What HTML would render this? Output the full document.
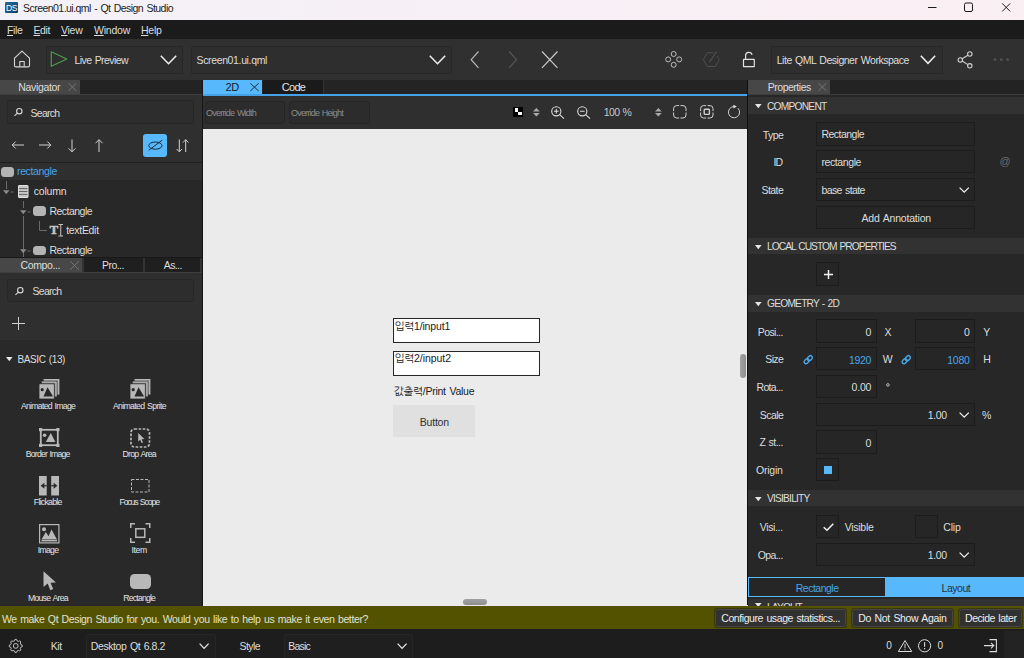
<!DOCTYPE html>
<html lang="en">
<head>
<meta charset="utf-8">
<title>Screen01.ui.qml - Qt Design Studio</title>
<style>
*{box-sizing:border-box;margin:0;padding:0}
html,body{width:1024px;height:658px;overflow:hidden;background:#262626}
body{font-family:"Liberation Sans","NanumGothic","Noto Sans CJK KR",sans-serif;font-size:10.500px;color:#e6e6e6;position:relative}
.a{position:absolute}
.t{position:absolute;white-space:nowrap;line-height:14px;height:14px}
svg{overflow:visible}
u{text-decoration-thickness:1px;text-underline-offset:1px}
</style>
</head>
<body>
<div class="a" style="left:0px;top:0px;width:1024px;height:20px;background:linear-gradient(90deg,#f3f1f8 0%,#f6f0f6 35%,#faeff3 100%);"></div>
<div class="a" style="left:5px;top:2px;width:13px;height:11px;background:linear-gradient(135deg,#2a6a99,#0d3d66);border-radius:1px"></div>
<div class="t" style="letter-spacing:-0.306px;left:5.9px;top:0.65px;font-size:8.5px;color:#ffffff;">DS</div>
<div class="t" style="letter-spacing:-0.535px;left:23px;top:0.61px;font-size:10.5px;color:#1c1c1c;word-spacing:0.9px;">Screen01.ui.qml - Qt Design Studio</div>
<svg class="a" style="left:920px;top:0px;" width="100" height="20" viewBox="0 0 100 20"><g fill="none" stroke="#1a1a1a" stroke-width="1"><path d="M8 7.500h8.500"/><rect x="44.500" y="3" width="8" height="8.500" rx="1.500"/><path d="M82.200 3.400l8 8M90.200 3.400l-8 8"/></g></svg>
<div class="a" style="left:0px;top:20px;width:1024px;height:19px;background:#1b1b1b;"></div>
<div class="t" style="letter-spacing:-0.359px;left:7px;top:23.46px;font-size:10.5px;color:#dedede;"><u>F</u>ile</div>
<div class="t" style="letter-spacing:-0.402px;left:33.5px;top:23.46px;font-size:10.5px;color:#dedede;"><u>E</u>dit</div>
<div class="t" style="letter-spacing:-0.273px;left:61px;top:23.46px;font-size:10.5px;color:#dedede;"><u>V</u>iew</div>
<div class="t" style="letter-spacing:-0.227px;left:94px;top:23.46px;font-size:10.5px;color:#dedede;"><u>W</u>indow</div>
<div class="t" style="letter-spacing:-0.277px;left:141px;top:23.46px;font-size:10.5px;color:#dedede;"><u>H</u>elp</div>
<div class="a" style="left:0px;top:39px;width:1024px;height:41px;background:#303030;"></div>
<div class="a" style="left:45.5px;top:45.5px;width:137.5px;height:28px;background:#2e2e2e;border:1px solid #272727;border-radius:2px;"></div>
<div class="a" style="left:191px;top:45.5px;width:261px;height:28px;background:#2e2e2e;border:1px solid #272727;border-radius:2px;"></div>
<div class="a" style="left:771px;top:45.5px;width:171.5px;height:28px;background:#2e2e2e;border:1px solid #272727;border-radius:2px;"></div>
<svg class="a" style="left:13px;top:50px;" width="18" height="18" viewBox="0 0 18 18"><g fill="none" stroke="#d8d8d8" stroke-width="1.100" stroke-linejoin="round"><path d="M1.500 8.200L9 1.200l7.500 7v7.200a1.500 1.500 0 0 1-1.500 1.500H3a1.500 1.500 0 0 1-1.500-1.500z"/><path d="M6.800 16.800v-5.300h4.400v5.300"/></g></svg>
<svg class="a" style="left:50px;top:51px;" width="18" height="16" viewBox="0 0 18 16"><path d="M1.300 0.800L16.800 8 1.300 15.300z" fill="none" stroke="#4e9a4e" stroke-width="1.200" stroke-linejoin="round"/></svg>
<div class="t" style="letter-spacing:-0.578px;left:74.5px;top:52.61px;font-size:10.5px;color:#dedede;word-spacing:0.9px;">Live Preview</div>
<svg class="a" style="left:160px;top:55.3px;" width="17" height="10" viewBox="0 0 17 10"><path d="M0.800 0.800l7.700 7.900 7.700-7.900" fill="none" stroke="#f0f0f0" stroke-width="1.500"/></svg>
<div class="t" style="letter-spacing:-0.358px;left:196.5px;top:52.61px;font-size:10.5px;color:#dedede;">Screen01.ui.qml</div>
<svg class="a" style="left:429px;top:55.3px;" width="17" height="10" viewBox="0 0 17 10"><path d="M0.800 0.800l7.700 7.900 7.700-7.900" fill="none" stroke="#f0f0f0" stroke-width="1.500"/></svg>
<svg class="a" style="left:470px;top:50.7px;" width="10" height="18" viewBox="0 0 10 18"><path d="M8.500 0.500L1.200 8.700l7.300 8.200" fill="none" stroke="#b8b8b8" stroke-width="1.200"/></svg>
<svg class="a" style="left:508px;top:50.7px;" width="10" height="18" viewBox="0 0 10 18"><path d="M1.200 0.500l7.300 8.200-7.300 8.200" fill="none" stroke="#555" stroke-width="1.200"/></svg>
<svg class="a" style="left:541px;top:50.7px;" width="18" height="18" viewBox="0 0 18 18"><path d="M1 0.500l15.500 16.400M16.500 0.500L1 16.900" fill="none" stroke="#c8c8c8" stroke-width="1.200"/></svg>
<svg class="a" style="left:665px;top:51px;" width="18" height="18" viewBox="0 0 18 18"><g fill="none" stroke="#cacaca" stroke-width="0.900"><circle cx="8.700" cy="3" r="2.500"/><circle cx="8.700" cy="13.800" r="2.500"/><circle cx="3.200" cy="8.400" r="2.500"/><circle cx="14.200" cy="8.400" r="2.500"/></g></svg>
<svg class="a" style="left:702px;top:52px;" width="18" height="15" viewBox="0 0 18 15"><g fill="none" stroke="#4e4e4e" stroke-width="1"><path d="M11.300 0.700H5.300l-4 6.900 4 6.900h8l4-6.900-2-3.400"/><path d="M14.600 -0.500L7.600 9.800" stroke-width="1.300"/></g></svg>
<svg class="a" style="left:742px;top:52px;" width="14" height="16" viewBox="0 0 14 16"><g fill="none" stroke="#e2e2e2" stroke-width="1.200"><rect x="1.500" y="7.400" width="10.800" height="7.200" rx="0.300"/><path d="M3.600 7.400V3.600a3.300 3.300 0 0 1 6.500-0.700"/></g></svg>
<div class="t" style="letter-spacing:-0.485px;left:776.75px;top:52.61px;font-size:10.5px;color:#dedede;word-spacing:0.9px;">Lite QML Designer Workspace</div>
<svg class="a" style="left:920px;top:55px;" width="17" height="10" viewBox="0 0 17 10"><path d="M0.800 0.800l7.200 7.500 7.200-7.500" fill="none" stroke="#f0f0f0" stroke-width="1.500"/></svg>
<svg class="a" style="left:957px;top:50.5px;" width="17" height="18" viewBox="0 0 17 18"><g fill="none" stroke="#d0d0d0" stroke-width="1.100"><circle cx="12.800" cy="3" r="2.200"/><circle cx="12.800" cy="14.800" r="2.200"/><circle cx="3.300" cy="8.900" r="2.200"/><path d="M5.200 7.800l5.700-3.600M5.200 10l5.700 3.600"/></g></svg>
<svg class="a" style="left:993px;top:58px;" width="17" height="4" viewBox="0 0 17 4"><g fill="#505050"><circle cx="2" cy="1.700" r="1.400"/><circle cx="8.300" cy="1.700" r="1.400"/><circle cx="14.600" cy="1.700" r="1.400"/></g></svg>
<div class="a" style="left:0px;top:80px;width:1024px;height:14px;background:#232323;"></div>
<div class="a" style="left:0px;top:94px;width:202px;height:1px;background:#3e3e3e;"></div>
<div class="a" style="left:748px;top:94px;width:276px;height:1px;background:#3e3e3e;"></div>
<div class="a" style="left:0px;top:80px;width:80px;height:14px;background:#474747;"></div>
<div class="t" style="letter-spacing:-0.328px;left:18.25px;top:79.61px;font-size:10.5px;color:#dedede;">Navigator</div>
<svg class="a" style="left:67.5px;top:83px;" width="9" height="8" viewBox="0 0 9 8"><path d="M0.500 0.300l7.700 7.500M8.200 0.300L0.500 7.800" fill="none" stroke="#757575" stroke-width="1"/></svg>
<div class="a" style="left:203px;top:80px;width:59px;height:14px;background:#57b9fc;"></div>
<div class="t" style="letter-spacing:-0.281px;left:225.5px;top:79.94px;font-size:11px;color:#16222c;">2D</div>
<svg class="a" style="left:249.5px;top:82.8px;" width="9" height="8" viewBox="0 0 9 8"><path d="M0.300 0.300l8.400 7.700M8.700 0.300L0.300 8" fill="none" stroke="#1f2f3c" stroke-width="1"/></svg>
<div class="a" style="left:263px;top:80px;width:60px;height:14px;background:#1a1a1a;"></div>
<div class="a" style="left:323px;top:80px;width:1px;height:14px;background:#333;"></div>
<div class="a" style="left:324px;top:80px;width:423px;height:14px;background:#242424;"></div>
<div class="t" style="letter-spacing:-0.699px;left:281.75px;top:79.94px;font-size:11px;color:#e4e4e4;">Code</div>
<div class="a" style="left:748px;top:80px;width:82px;height:14px;background:#474747;"></div>
<div class="t" style="letter-spacing:-0.486px;left:767.75px;top:79.86px;font-size:10.5px;color:#dedede;">Properties</div>
<svg class="a" style="left:817.5px;top:83px;" width="9" height="8" viewBox="0 0 9 8"><path d="M0.500 0.300l7.700 7.500M8.200 0.300L0.500 7.800" fill="none" stroke="#757575" stroke-width="1"/></svg>
<div class="a" style="left:0px;top:95px;width:202px;height:67px;background:#2f2f2f;"></div>
<div class="a" style="left:0px;top:162px;width:202px;height:1px;background:#1f1f1f;"></div>
<div class="a" style="left:0px;top:163px;width:202px;height:17px;background:#2f2f2f;"></div>
<div class="a" style="left:0px;top:180px;width:202px;height:77px;background:#282828;"></div>
<div class="a" style="left:7px;top:100.2px;width:187px;height:23.5px;background:#2d2d2d;border:1px solid #262626;border-radius:3px;"></div>
<svg class="a" style="left:13.9px;top:107.5px;" width="9" height="8" viewBox="0 0 9 8"><g fill="none" stroke="#d8d8d8" stroke-width="1.100"><circle cx="5.300" cy="3.200" r="2.700"/><path d="M3.400 5.200L0.500 7.800"/></g></svg>
<div class="t" style="letter-spacing:-0.714px;left:30.5px;top:105.66px;font-size:10.5px;color:#dedede;">Search</div>
<svg class="a" style="left:11px;top:139px;" width="14" height="12" viewBox="0 0 14 12"><path d="M13 6H1.200M4.700 2.500L1.200 6l3.500 3.500" fill="none" stroke="#d2d2d2" stroke-width="1"/></svg>
<svg class="a" style="left:38px;top:139px;" width="14" height="12" viewBox="0 0 14 12"><path d="M1 6h11.800M9.300 2.500L12.800 6l-3.500 3.500" fill="none" stroke="#d2d2d2" stroke-width="1"/></svg>
<svg class="a" style="left:66px;top:138.5px;" width="12" height="14" viewBox="0 0 12 14"><path d="M6 0.500v12.300M2.500 9.300L6 12.800l3.500-3.500" fill="none" stroke="#d2d2d2" stroke-width="1"/></svg>
<svg class="a" style="left:93px;top:138.5px;" width="12" height="14" viewBox="0 0 12 14"><path d="M6 13V0.700M2.500 4.200L6 0.700 9.500 4.200" fill="none" stroke="#d2d2d2" stroke-width="1"/></svg>
<div class="a" style="left:143.2px;top:133.5px;width:24px;height:23.5px;background:#57b9fc;border-radius:3px"></div>
<svg class="a" style="left:147.7px;top:139px;" width="15" height="13" viewBox="0 0 15 13"><g fill="none" stroke="#1a2a36" stroke-width="1"><ellipse cx="7.400" cy="6.600" rx="6.600" ry="3.600"/><path d="M14.200 1.100L0.700 11.300"/></g></svg>
<svg class="a" style="left:175.5px;top:138.5px;" width="13" height="14" viewBox="0 0 13 14"><path d="M3.300 0.500v12.300M0.600 10L3.300 12.800 6 10M9.700 13V0.700M7 3.500L9.700 0.700l2.700 2.800" fill="none" stroke="#d2d2d2" stroke-width="1"/></svg>
<div class="a" style="left:1px;top:167px;width:13px;height:9.7px;background:#b4b4b4;border-radius:3.500px"></div>
<div class="t" style="letter-spacing:-0.356px;left:17px;top:164.26px;font-size:10.5px;color:#4aa6e8;">rectangle</div>
<div class="a" style="left:6.2px;top:181px;width:1px;height:8px;background:#6a6a6a;"></div>
<svg class="a" style="left:3.4px;top:190px;" width="11" height="5" viewBox="0 0 11 5"><path d="M0 0.300h6.500L3.250 4.200z" fill="#8a8a8a"/><path d="M7.500 2h3" stroke="#6a6a6a" stroke-width="1"/></svg>
<svg class="a" style="left:18.4px;top:185px;" width="10.5" height="13" viewBox="0 0 10.5 13"><rect x="0.500" y="0.500" width="9.500" height="12" rx="0.500" fill="#c6c6c6" stroke="#e0e0e0" stroke-width="1"/><g stroke="#4a4a4a" stroke-width="0.800"><path d="M1 3.600h8.500M1 6.500h8.500M1 9.400h8.500"/></g></svg>
<div class="t" style="letter-spacing:-0.185px;left:33.75px;top:184.26px;font-size:10.5px;color:#dedede;">column</div>
<div class="a" style="left:23px;top:200.5px;width:1px;height:7px;background:#6a6a6a;"></div>
<svg class="a" style="left:20px;top:209.5px;" width="11" height="5" viewBox="0 0 11 5"><path d="M0 0.300h6.500L3.250 4.200z" fill="#8a8a8a"/><path d="M7.500 2h3" stroke="#6a6a6a" stroke-width="1"/></svg>
<div class="a" style="left:33.2px;top:206px;width:13.2px;height:9.8px;background:#b4b4b4;border-radius:3.500px"></div>
<div class="t" style="letter-spacing:-0.531px;left:49.5px;top:203.51px;font-size:10.5px;color:#dedede;">Rectangle</div>
<div class="a" style="left:23px;top:215.5px;width:1px;height:41.5px;background:#6a6a6a;"></div>
<svg class="a" style="left:39px;top:221px;" width="8" height="10" viewBox="0 0 8 10"><path d="M0.500 0v9.500H8" fill="none" stroke="#6a6a6a" stroke-width="1"/></svg>
<div class="t" style="letter-spacing:0.000px;left:49.8px;top:223.27px;font-size:12.5px;color:#c4c4c4;font-family:'Liberation Serif',serif;font-weight:bold;-webkit-text-stroke:0.600px #c4c4c4">T</div>
<svg class="a" style="left:57.5px;top:224px;" width="6" height="12.5" viewBox="0 0 6 12.5"><path d="M0.500 0.500h4.500M2.750 0.500v11.500M0.500 12h4.500" fill="none" stroke="#c4c4c4" stroke-width="1"/></svg>
<div class="t" style="letter-spacing:-0.316px;left:66.25px;top:223.01px;font-size:10.5px;color:#dedede;">textEdit</div>
<svg class="a" style="left:20px;top:248.5px;" width="11" height="5" viewBox="0 0 11 5"><path d="M0 0.300h6.500L3.250 4.200z" fill="#8a8a8a"/><path d="M7.500 2h3" stroke="#6a6a6a" stroke-width="1"/></svg>
<div class="a" style="left:33.2px;top:245.5px;width:13.2px;height:9.8px;background:#b4b4b4;border-radius:3.500px"></div>
<div class="t" style="letter-spacing:-0.531px;left:49.5px;top:242.51px;font-size:10.5px;color:#dedede;">Rectangle</div>
<div class="a" style="left:0px;top:257px;width:202px;height:15px;background:#1f1f1f;"></div>
<div class="a" style="left:0px;top:257px;width:202px;height:1px;background:#181818;"></div>
<div class="a" style="left:0px;top:272px;width:202px;height:1px;background:#3e3e3e;"></div>
<div class="a" style="left:0px;top:257.5px;width:82px;height:14.5px;background:#474747;"></div>
<div class="t" style="letter-spacing:-0.389px;left:20.5px;top:257.86px;font-size:10.5px;color:#dedede;">Compo...</div>
<svg class="a" style="left:69.5px;top:260.5px;" width="9" height="9" viewBox="0 0 9 9"><path d="M0.300 0.300l8.500 8.300M8.800 0.300L0.300 8.600" fill="none" stroke="#757575" stroke-width="1"/></svg>
<div class="a" style="left:82px;top:257.5px;width:1.5px;height:14.5px;background:#333;"></div>
<div class="a" style="left:143px;top:257.5px;width:1.5px;height:14.5px;background:#333;"></div>
<div class="a" style="left:200px;top:257.5px;width:2px;height:14.5px;background:#333;"></div>
<div class="t" style="letter-spacing:-0.557px;left:102px;top:257.86px;font-size:10.5px;color:#dedede;">Pro...</div>
<div class="t" style="letter-spacing:-0.603px;left:163.75px;top:257.86px;font-size:10.5px;color:#dedede;">As...</div>
<div class="a" style="left:0px;top:273px;width:202px;height:67px;background:#2f2f2f;"></div>
<div class="a" style="left:0px;top:340px;width:202px;height:265px;background:#292929;"></div>
<div class="a" style="left:7px;top:278.5px;width:187px;height:23px;background:#2d2d2d;border:1px solid #262626;border-radius:3px;"></div>
<svg class="a" style="left:14.5px;top:286.5px;" width="9" height="8" viewBox="0 0 9 8"><g fill="none" stroke="#d8d8d8" stroke-width="1.100"><circle cx="5.300" cy="3.200" r="2.700"/><path d="M3.400 5.200L0.500 7.800"/></g></svg>
<div class="t" style="letter-spacing:-0.714px;left:32.5px;top:284.06px;font-size:10.5px;color:#dedede;">Search</div>
<svg class="a" style="left:12px;top:317.2px;" width="13" height="13" viewBox="0 0 13 13"><path d="M6.500 0v13M0 6.500h13" stroke="#d0d0d0" stroke-width="1" fill="none"/></svg>
<svg class="a" style="left:5.5px;top:357px;" width="7" height="5" viewBox="0 0 7 5"><path d="M0 0h6.500L3.250 4.200z" fill="#e6e6e6"/></svg>
<div class="t" style="letter-spacing:-0.398px;left:17.5px;top:352.54px;font-size:10px;color:#dedede;word-spacing:0.9px;">BASIC (13)</div>
<div class="a" style="left:202px;top:80px;width:1px;height:525px;background:#151515;"></div>
<div class="a" style="left:203px;top:94px;width:544px;height:1.5px;background:#46a2e6;"></div>
<div class="a" style="left:203px;top:95.5px;width:544px;height:33px;background:#2f2f2f;"></div>
<div class="a" style="left:203px;top:128.5px;width:544px;height:477px;background:#ebebeb;"></div>
<div class="a" style="left:204.5px;top:100.5px;width:80px;height:23px;background:#2c2c2c;border:1px solid #252525;border-radius:3px;"></div>
<div class="a" style="left:288.5px;top:100.5px;width:81px;height:23px;background:#2c2c2c;border:1px solid #252525;border-radius:3px;"></div>
<div class="t" style="letter-spacing:-0.780px;left:206px;top:105.98px;font-size:9px;color:#8c8c8c;word-spacing:0.9px;">Override Width</div>
<div class="t" style="letter-spacing:-0.796px;left:291px;top:105.98px;font-size:9px;color:#8c8c8c;word-spacing:0.9px;">Override Height</div>
<div class="a" style="left:513px;top:107px;width:10px;height:9.5px;background:#000;"></div>
<div class="a" style="left:514.5px;top:108.3px;width:3.5px;height:3.3px;background:#fff;"></div>
<div class="a" style="left:518px;top:111.6px;width:3.5px;height:3.3px;background:#fff;"></div>
<svg class="a" style="left:532.5px;top:108px;" width="7" height="9" viewBox="0 0 7 9"><path d="M3.400 0L6.800 3.600H0zM3.400 8.600L6.800 5H0z" fill="#a8a8a8"/></svg>
<svg class="a" style="left:550.5px;top:105.5px;" width="14" height="13" viewBox="0 0 14 13"><g fill="none" stroke="#dcdcdc" stroke-width="1.100"><circle cx="5.300" cy="5.300" r="4.600"/><path d="M8.700 8.700l4.300 4M3 5.300h4.600M5.300 3v4.600"/></g></svg>
<svg class="a" style="left:577.3px;top:105.5px;" width="14" height="13" viewBox="0 0 14 13"><g fill="none" stroke="#dcdcdc" stroke-width="1.100"><circle cx="5.300" cy="5.300" r="4.600"/><path d="M8.700 8.700l4.300 4M3 5.300h4.600"/></g></svg>
<div class="t" style="letter-spacing:-0.637px;left:603.75px;top:105.11px;font-size:10.5px;color:#c8c8c8;word-spacing:0.9px;">100 %</div>
<svg class="a" style="left:655.2px;top:108px;" width="7" height="9" viewBox="0 0 7 9"><path d="M3.400 0L6.800 3.600H0zM3.400 8.600L6.800 5H0z" fill="#a8a8a8"/></svg>
<svg class="a" style="left:673.1px;top:104.8px;" width="14" height="14" viewBox="0 0 14 14"><path d="M6.100 0.600H3.600a3 3 0 0 0-3 3v2.500M0.600 7.500v2.500a3 3 0 0 0 3 3h2.500M7.500 13h2.500a3 3 0 0 0 3-3V7.500M13 6.100V3.600a3 3 0 0 0-3-3H7.500" fill="none" stroke="#d0d0d0" stroke-width="1"/></svg>
<svg class="a" style="left:700px;top:104.8px;" width="14" height="14" viewBox="0 0 14 14"><path d="M6.100 0.600H3.600a3 3 0 0 0-3 3v2.500M0.600 7.500v2.500a3 3 0 0 0 3 3h2.500M7.500 13h2.500a3 3 0 0 0 3-3V7.500M13 6.100V3.600a3 3 0 0 0-3-3H7.500" fill="none" stroke="#d0d0d0" stroke-width="1"/><rect x="4.200" y="4.200" width="5.200" height="5.200" rx="0.800" fill="none" stroke="#d0d0d0" stroke-width="1.400"/></svg>
<svg class="a" style="left:728px;top:105px;" width="13" height="14" viewBox="0 0 13 14"><path d="M9.960 3.240A5.600 5.600 0 1 1 6 1.600" fill="none" stroke="#d0d0d0" stroke-width="1"/><path d="M5.400 -0.200l3.400 1.800-3.400 1.900z" fill="#e0e0e0"/></svg>
<div class="a" style="left:393px;top:318px;width:147px;height:25px;background:#ffffff;border:1px solid #262626;border-radius:0px;"></div>
<div class="a" style="left:393px;top:350.5px;width:147px;height:25px;background:#ffffff;border:1px solid #262626;border-radius:0px;"></div>
<div class="t" style="letter-spacing:-0.141px;left:394.5px;top:318.76px;font-size:10.5px;color:#1a1a1a;">입력1/input1</div>
<div class="t" style="letter-spacing:-0.071px;left:394.5px;top:351.36px;font-size:10.5px;color:#1a1a1a;">입력2/input2</div>
<div class="t" style="letter-spacing:-0.234px;left:393.8px;top:383.66px;font-size:10.5px;color:#1a1a1a;word-spacing:0.9px;">값출력/Print Value</div>
<div class="a" style="left:393.2px;top:405px;width:81.5px;height:32px;background:#e0e0e0;"></div>
<div class="t" style="letter-spacing:-0.227px;left:419.8px;top:414.56px;font-size:10.5px;color:#303030;">Button</div>
<div class="a" style="left:463px;top:598.5px;width:24px;height:6px;background:linear-gradient(#a2a2a2,#8e8e8e);border-radius:3px"></div>
<div class="a" style="left:740px;top:353.5px;width:6px;height:24px;background:linear-gradient(90deg,#a2a2a2,#8e8e8e);border-radius:3px"></div>
<div class="a" style="left:746.5px;top:128.5px;width:0.5px;height:477px;background:#f8f8f8;"></div>
<div class="a" style="left:747px;top:80px;width:1px;height:525px;background:#101010;"></div>
<div class="a" style="left:748px;top:95px;width:276px;height:510px;background:#272727;"></div>
<div class="a" style="left:748px;top:97.25px;width:276px;height:16.75px;background:#323232;"></div>
<svg class="a" style="left:754.5px;top:104.25px;" width="7" height="5" viewBox="0 0 7 5"><path d="M0 0h6.600L3.300 4.200z" fill="#e6e6e6"/></svg>
<div class="t" style="letter-spacing:-0.747px;left:767px;top:99.52px;font-size:10.2px;color:#dedede;">COMPONENT</div>
<div class="t" style="letter-spacing:-0.566px;left:762.75px;top:127.86px;font-size:10.5px;color:#dedede;">Type</div>
<div class="a" style="left:816.1px;top:122.25px;width:159.25px;height:23.25px;background:#262626;border:1px solid #1c1c1c;border-radius:0px;"></div>
<div class="t" style="letter-spacing:-0.531px;left:821.5px;top:127.36px;font-size:10.5px;color:#dedede;">Rectangle</div>
<div class="t" style="letter-spacing:-0.875px;left:773.5px;top:155.36px;font-size:10.5px;color:#dedede;">ID</div>
<div class="a" style="left:816.1px;top:150.25px;width:159.25px;height:23px;background:#262626;border:1px solid #1c1c1c;border-radius:0px;"></div>
<div class="t" style="letter-spacing:-0.411px;left:821.5px;top:155.36px;font-size:10.5px;color:#dedede;">rectangle</div>
<div class="t" style="letter-spacing:0.000px;left:999.6px;top:154.49px;font-size:11px;color:#6c6c6c;">@</div>
<div class="t" style="letter-spacing:-0.556px;left:761.5px;top:182.86px;font-size:10.5px;color:#dedede;">State</div>
<div class="a" style="left:816.1px;top:177.75px;width:159.25px;height:23px;background:#262626;border:1px solid #1c1c1c;border-radius:0px;"></div>
<div class="t" style="letter-spacing:-0.611px;left:821.5px;top:182.86px;font-size:10.5px;color:#dedede;word-spacing:0.9px;">base state</div>
<svg class="a" style="left:959px;top:187px;" width="11" height="6.5" viewBox="0 0 11 6.5"><path d="M0.600 0.600l4.600 4.600 4.600-4.600" fill="none" stroke="#f0f0f0" stroke-width="1.300"/></svg>
<div class="a" style="left:816.1px;top:205.5px;width:159.25px;height:23px;background:#262626;border:1px solid #1c1c1c;border-radius:0px;"></div>
<div class="t" style="letter-spacing:-0.189px;left:861.5px;top:210.86px;font-size:10.5px;color:#dedede;word-spacing:0.9px;">Add Annotation</div>
<div class="a" style="left:748px;top:237.5px;width:276px;height:16.75px;background:#323232;"></div>
<svg class="a" style="left:754.5px;top:244.5px;" width="7" height="5" viewBox="0 0 7 5"><path d="M0 0h6.600L3.300 4.200z" fill="#e6e6e6"/></svg>
<div class="t" style="letter-spacing:-0.921px;left:767px;top:239.77px;font-size:10.2px;color:#dedede;word-spacing:0.9px;">LOCAL CUSTOM PROPERTIES</div>
<div class="a" style="left:816.1px;top:262px;width:23.25px;height:23.5px;background:#262626;border:1px solid #1c1c1c;border-radius:0px;"></div>
<svg class="a" style="left:823.5px;top:270px;" width="9" height="9" viewBox="0 0 9 9"><path d="M4.500 0v9M0 4.500h9" stroke="#f4f4f4" stroke-width="1.500" fill="none"/></svg>
<div class="a" style="left:748px;top:295px;width:276px;height:16.5px;background:#323232;"></div>
<svg class="a" style="left:754.5px;top:302px;" width="7" height="5" viewBox="0 0 7 5"><path d="M0 0h6.600L3.300 4.200z" fill="#e6e6e6"/></svg>
<div class="t" style="letter-spacing:-0.755px;left:767px;top:297.27px;font-size:10.2px;color:#dedede;word-spacing:0.9px;">GEOMETRY - 2D</div>
<div class="t" style="letter-spacing:-0.598px;left:757.75px;top:324.86px;font-size:10.5px;color:#dedede;">Posi...</div>
<div class="a" style="left:816.1px;top:319.25px;width:60.75px;height:23.25px;background:#262626;border:1px solid #1c1c1c;border-radius:0px;"></div>
<div class="t" style="letter-spacing:-0.344px;left:865.51px;top:324.81px;font-size:10.5px;color:#dedede;">0</div>
<div class="t" style="letter-spacing:-0.516px;left:884.5px;top:324.86px;font-size:10.5px;color:#dedede;">X</div>
<div class="a" style="left:914.9px;top:319.25px;width:60.5px;height:23.25px;background:#262626;border:1px solid #1c1c1c;border-radius:0px;"></div>
<div class="t" style="letter-spacing:-0.344px;left:964.06px;top:324.81px;font-size:10.5px;color:#dedede;">0</div>
<div class="t" style="letter-spacing:-1.266px;left:983.25px;top:324.86px;font-size:10.5px;color:#dedede;">Y</div>
<div class="t" style="letter-spacing:-0.609px;left:765.25px;top:352.36px;font-size:10.5px;color:#dedede;">Size</div>
<svg class="a" style="left:802.5px;top:355px;" width="10.5" height="9.5" viewBox="0 0 10.5 9.5"><g fill="none" stroke="#4aa6e8" stroke-width="1.400"><rect x="0.800" y="4.300" width="5.600" height="3.800" rx="1.900" transform="rotate(-45 3.600 6.200)"/><rect x="4" y="1.300" width="5.600" height="3.800" rx="1.900" transform="rotate(-45 6.800 3.200)"/></g></svg>
<div class="a" style="left:816.1px;top:347px;width:60.75px;height:23.25px;background:#262626;border:1px solid #1c1c1c;border-radius:0px;"></div>
<div class="t" style="letter-spacing:-0.340px;left:849.01px;top:352.56px;font-size:10.5px;color:#4aa6e8;">1920</div>
<div class="t" style="letter-spacing:0.078px;left:882.75px;top:352.36px;font-size:10.5px;color:#dedede;">W</div>
<svg class="a" style="left:901px;top:355px;" width="10.5" height="9.5" viewBox="0 0 10.5 9.5"><g fill="none" stroke="#4aa6e8" stroke-width="1.400"><rect x="0.800" y="4.300" width="5.600" height="3.800" rx="1.900" transform="rotate(-45 3.600 6.200)"/><rect x="4" y="1.300" width="5.600" height="3.800" rx="1.900" transform="rotate(-45 6.800 3.200)"/></g></svg>
<div class="a" style="left:914.9px;top:347px;width:60.5px;height:23.25px;background:#262626;border:1px solid #1c1c1c;border-radius:0px;"></div>
<div class="t" style="letter-spacing:-0.215px;left:947.19px;top:352.56px;font-size:10.5px;color:#4aa6e8;">1080</div>
<div class="t" style="letter-spacing:-1.844px;left:983.25px;top:352.36px;font-size:10.5px;color:#dedede;">H</div>
<div class="t" style="letter-spacing:-0.670px;left:756.5px;top:379.86px;font-size:10.5px;color:#dedede;">Rota...</div>
<div class="a" style="left:816.1px;top:374.75px;width:60.75px;height:23.25px;background:#262626;border:1px solid #1c1c1c;border-radius:0px;"></div>
<div class="t" style="letter-spacing:-0.234px;left:851.62px;top:380.31px;font-size:10.5px;color:#dedede;">0.00</div>
<svg class="a" style="left:885.5px;top:383px;" width="4" height="4" viewBox="0 0 4 4"><circle cx="1.900" cy="1.900" r="1.300" fill="none" stroke="#c8c8c8" stroke-width="0.900"/></svg>
<div class="t" style="letter-spacing:-0.553px;left:759.75px;top:407.61px;font-size:10.5px;color:#dedede;">Scale</div>
<div class="a" style="left:816.1px;top:402.5px;width:159.25px;height:23px;background:#262626;border:1px solid #1c1c1c;border-radius:0px;"></div>
<div class="t" style="letter-spacing:-0.422px;left:927.83px;top:407.61px;font-size:10.5px;color:#dedede;">1.00</div>
<svg class="a" style="left:959px;top:412px;" width="11" height="6.5" viewBox="0 0 11 6.5"><path d="M0.600 0.600l4.600 4.600 4.600-4.600" fill="none" stroke="#f0f0f0" stroke-width="1.300"/></svg>
<div class="t" style="letter-spacing:-1.094px;left:982px;top:407.61px;font-size:10.5px;color:#dedede;">%</div>
<div class="t" style="letter-spacing:-0.558px;left:759.5px;top:435.11px;font-size:10.5px;color:#dedede;word-spacing:0.9px;">Z st...</div>
<div class="a" style="left:816.1px;top:430.25px;width:60.75px;height:23.25px;background:#262626;border:1px solid #1c1c1c;border-radius:0px;"></div>
<div class="t" style="letter-spacing:-0.344px;left:865.51px;top:435.81px;font-size:10.5px;color:#dedede;">0</div>
<div class="t" style="letter-spacing:-0.211px;left:756px;top:463.36px;font-size:10.5px;color:#dedede;">Origin</div>
<div class="a" style="left:816.1px;top:458.25px;width:23.25px;height:22.75px;background:#262626;border:1px solid #1c1c1c;border-radius:0px;"></div>
<div class="a" style="left:824px;top:466px;width:8px;height:7.5px;background:#57b9fc;"></div>
<div class="a" style="left:748px;top:489.5px;width:276px;height:16.5px;background:#323232;"></div>
<svg class="a" style="left:754.5px;top:496.5px;" width="7" height="5" viewBox="0 0 7 5"><path d="M0 0h6.600L3.300 4.200z" fill="#e6e6e6"/></svg>
<div class="t" style="letter-spacing:-0.789px;left:767px;top:491.77px;font-size:10.2px;color:#dedede;">VISIBILITY</div>
<div class="t" style="letter-spacing:-0.355px;left:759.75px;top:519.61px;font-size:10.5px;color:#dedede;">Visi...</div>
<div class="a" style="left:816.1px;top:514.5px;width:23.25px;height:23.25px;background:#262626;border:1px solid #1c1c1c;border-radius:0px;"></div>
<svg class="a" style="left:822.5px;top:523.3px;" width="11" height="8" viewBox="0 0 11 8"><path d="M0.700 4.200l3.300 3L10.300 0.800" fill="none" stroke="#f4f4f4" stroke-width="1.500"/></svg>
<div class="t" style="letter-spacing:-0.286px;left:844.75px;top:519.61px;font-size:10.5px;color:#dedede;">Visible</div>
<div class="a" style="left:914.9px;top:514.5px;width:23.25px;height:23.25px;background:#262626;border:1px solid #1c1c1c;border-radius:0px;"></div>
<div class="t" style="letter-spacing:-0.148px;left:943.25px;top:519.61px;font-size:10.5px;color:#dedede;">Clip</div>
<div class="t" style="letter-spacing:-0.602px;left:757.75px;top:547.86px;font-size:10.5px;color:#dedede;">Opa...</div>
<div class="a" style="left:816.1px;top:542.75px;width:159.25px;height:23px;background:#262626;border:1px solid #1c1c1c;border-radius:0px;"></div>
<div class="t" style="letter-spacing:-0.422px;left:927.83px;top:547.86px;font-size:10.5px;color:#dedede;">1.00</div>
<svg class="a" style="left:959px;top:552px;" width="11" height="6.5" viewBox="0 0 11 6.5"><path d="M0.600 0.600l4.600 4.600 4.600-4.600" fill="none" stroke="#f0f0f0" stroke-width="1.300"/></svg>
<div class="a" style="left:748.25px;top:577.25px;width:137.5px;height:19.25px;background:#262626;border:1px solid #57b9fc;border-radius:0px;"></div>
<div class="a" style="left:885.75px;top:577.25px;width:138.25px;height:19.25px;background:#57b9fc;"></div>
<div class="t" style="letter-spacing:-0.503px;left:795.75px;top:580.66px;font-size:10.5px;color:#4aa6e8;">Rectangle</div>
<div class="t" style="letter-spacing:-0.464px;left:941.5px;top:580.66px;font-size:10.5px;color:#23313c;">Layout</div>
<div class="a" style="left:748px;top:598.5px;width:276px;height:8px;background:#323232;"></div>
<svg class="a" style="left:754.5px;top:602.75px;" width="7" height="5" viewBox="0 0 7 5"><path d="M0 0h6.600L3.300 4.200z" fill="#e6e6e6"/></svg>
<div class="t" style="letter-spacing:-0.836px;left:767px;top:600.77px;font-size:10.2px;color:#dedede;">LAYOUT</div>
<div class="a" style="left:0px;top:605.7px;width:1024px;height:0.8px;background:#84845e;"></div>
<div class="a" style="left:0px;top:606.2px;width:1024px;height:22.8px;background:#525200;"></div>
<div class="t" style="letter-spacing:-0.379px;left:2px;top:611.61px;font-size:10.5px;color:#e2e2d2;word-spacing:0.9px;">We make Qt Design Studio for you. Would you like to help us make it even better?</div>
<div class="a" style="left:715px;top:608.5px;width:131.25px;height:18px;background:#313131;border:1px solid #464646;border-radius:2.5px;box-shadow:0 0 0 1px #383808"></div>
<div class="t" style="letter-spacing:-0.415px;left:721.25px;top:611.26px;font-size:10.5px;color:#eeeeee;word-spacing:0.9px;">Configure usage statistics...</div>
<div class="a" style="left:851.5px;top:608.5px;width:101px;height:18px;background:#313131;border:1px solid #464646;border-radius:2.5px;box-shadow:0 0 0 1px #383808"></div>
<div class="t" style="letter-spacing:-0.324px;left:858.25px;top:611.26px;font-size:10.5px;color:#eeeeee;word-spacing:0.9px;">Do Not Show Again</div>
<div class="a" style="left:958.75px;top:608.5px;width:63.25px;height:18px;background:#313131;border:1px solid #464646;border-radius:2.5px;box-shadow:0 0 0 1px #383808"></div>
<div class="t" style="letter-spacing:-0.453px;left:965px;top:611.26px;font-size:10.5px;color:#eeeeee;word-spacing:0.9px;">Decide later</div>
<div class="a" style="left:0px;top:629px;width:1024px;height:29px;background:#1d1d1d;"></div>
<div class="a" style="left:1004px;top:631px;width:20px;height:27px;background:#232323;"></div>
<svg class="a" style="left:8.75px;top:638.5px;" width="13.5" height="14" viewBox="0 0 13.5 14"><g fill="none" stroke="#c0c0c0" stroke-width="1" stroke-linejoin="round"><path d="M5.54 1.74L5.91 0.45L7.59 0.45L7.96 1.74L9.54 2.40L10.71 1.75L11.90 2.94L11.25 4.11L11.91 5.69L13.20 6.06L13.20 7.74L11.91 8.11L11.25 9.69L11.90 10.86L10.71 12.05L9.54 11.40L7.96 12.06L7.59 13.35L5.91 13.35L5.54 12.06L3.96 11.40L2.79 12.05L1.60 10.86L2.25 9.69L1.59 8.11L0.30 7.74L0.30 6.06L1.59 5.69L2.25 4.11L1.60 2.94L2.79 1.75L3.96 2.40z"/><circle cx="6.75" cy="6.9" r="2.400"/></g></svg>
<div class="t" style="letter-spacing:-0.422px;left:50.75px;top:639.11px;font-size:10.5px;color:#dedede;">Kit</div>
<div class="a" style="left:85.75px;top:633.5px;width:130px;height:26px;background:#1f1f1f;border:1px solid #262626;border-radius:2px;"></div>
<div class="t" style="letter-spacing:-0.396px;left:90.75px;top:639.11px;font-size:10.5px;color:#dedede;word-spacing:0.9px;">Desktop Qt 6.8.2</div>
<svg class="a" style="left:198.75px;top:643px;" width="11" height="6.5" viewBox="0 0 11 6.5"><path d="M0.600 0.600l4.500 4.800 4.500-4.800" fill="none" stroke="#e8e8e8" stroke-width="1.300"/></svg>
<div class="t" style="letter-spacing:-0.569px;left:239.5px;top:639.11px;font-size:10.5px;color:#dedede;">Style</div>
<div class="a" style="left:283.75px;top:633.5px;width:129.5px;height:26px;background:#1f1f1f;border:1px solid #262626;border-radius:2px;"></div>
<div class="t" style="letter-spacing:-0.787px;left:288.25px;top:639.11px;font-size:10.5px;color:#dedede;">Basic</div>
<svg class="a" style="left:396.75px;top:643px;" width="11" height="6.5" viewBox="0 0 11 6.5"><path d="M0.600 0.600l4.500 4.800 4.500-4.800" fill="none" stroke="#e8e8e8" stroke-width="1.300"/></svg>
<div class="t" style="letter-spacing:0.237px;left:886.3px;top:639.24px;font-size:10px;color:#dedede;">0</div>
<svg class="a" style="left:898px;top:639.7px;" width="14" height="12" viewBox="0 0 14 12"><g fill="none" stroke="#dcdcdc" stroke-width="1" stroke-linejoin="round"><path d="M7 0.600L13.700 11.500H0.400z"/><path d="M7 3.800v4.500M7 9.200v1.100" stroke-width="0.900"/></g></svg>
<svg class="a" style="left:918px;top:638.8px;" width="14" height="14" viewBox="0 0 14 14"><g fill="none" stroke="#dcdcdc" stroke-width="1"><circle cx="6.600" cy="6.800" r="6.100"/><path d="M6.600 3.300v4.500M6.600 9v1.300" stroke-width="1.100"/></g></svg>
<div class="t" style="letter-spacing:0.237px;left:937.6px;top:639.24px;font-size:10px;color:#dedede;">0</div>
<svg class="a" style="left:984px;top:638.8px;" width="13" height="13.5" viewBox="0 0 13 13.5"><g fill="none" stroke="#dcdcdc" stroke-width="1.100"><path d="M5.500 0.600h6.900v12H5.500"/><path d="M0 6.600h9.800M7 3.800l2.800 2.800-2.800 2.800"/></g></svg>
<svg class="a" style="left:38.75px;top:379px;" width="20.5" height="20" viewBox="0 0 20.5 20"><rect x="4.700" y="0" width="15.500" height="15.500" fill="#8e8e8e"/><path d="M4.700 0.600h15v15" fill="none" stroke="#b8b8b8" stroke-width="1.200"/><rect x="2.300" y="2.300" width="15.500" height="15.500" fill="#8e8e8e" stroke="#292929" stroke-width="0.800"/><path d="M2.800 3.200h14.300v14.300" fill="none" stroke="#b8b8b8" stroke-width="1.200"/><rect x="0" y="4.800" width="15.300" height="15.200" fill="#b8b8b8" stroke="#292929" stroke-width="0.800"/><circle cx="3.200" cy="10.700" r="1.600" fill="#292929"/><path d="M4.500 17.400l4-9.100 5.600 9.100z" fill="#292929"/></svg>
<div class="t" style="letter-spacing:-0.709px;left:20.92px;top:398.59px;font-size:8.7px;color:#e4e4e4;word-spacing:0.9px;">Animated Image</div>
<svg class="a" style="left:129.5px;top:379px;" width="20.5" height="20" viewBox="0 0 20.5 20"><rect x="4.700" y="0" width="15.500" height="15.500" fill="#8e8e8e"/><path d="M4.700 0.600h15v15" fill="none" stroke="#b8b8b8" stroke-width="1.200"/><rect x="2.300" y="2.300" width="15.500" height="15.500" fill="#8e8e8e" stroke="#292929" stroke-width="0.800"/><path d="M2.800 3.200h14.300v14.300" fill="none" stroke="#b8b8b8" stroke-width="1.200"/><rect x="0" y="4.800" width="15.300" height="15.200" fill="#b8b8b8" stroke="#292929" stroke-width="0.800"/><circle cx="3.200" cy="10.700" r="1.600" fill="#292929"/><path d="M4.500 17.400l4-9.100 5.600 9.100z" fill="#292929"/></svg>
<div class="t" style="letter-spacing:-0.648px;left:112.93px;top:398.59px;font-size:8.7px;color:#e4e4e4;word-spacing:0.9px;">Animated Sprite</div>
<svg class="a" style="left:38.75px;top:428px;" width="20.5" height="19" viewBox="0 0 20.5 19"><rect x="1.800" y="1.800" width="17" height="15.400" fill="none" stroke="#b8b8b8" stroke-width="1.800"/><g fill="#b8b8b8"><rect x="0" y="0" width="3.200" height="3.200"/><rect x="17.300" y="0" width="3.200" height="3.200"/><rect x="0" y="15.800" width="3.200" height="3.200"/><rect x="17.300" y="15.800" width="3.200" height="3.200"/><circle cx="5.600" cy="7.200" r="1.800"/><path d="M6.800 14l5-9 4.500 9z"/></g></svg>
<div class="t" style="letter-spacing:-0.816px;left:25.82px;top:446.84px;font-size:8.7px;color:#e4e4e4;word-spacing:0.9px;">Border Image</div>
<svg class="a" style="left:129.75px;top:427.5px;" width="20.5" height="20" viewBox="0 0 20.5 20"><rect x="1" y="1" width="18.500" height="18" rx="3.500" fill="none" stroke="#b8b8b8" stroke-width="1.700" stroke-dasharray="2.600 1.500"/><path d="M8.200 5l0 8.600 2-1.800 1.400 3.200 1.400-0.600-1.400-3.100 2.800-0.200z" fill="#b8b8b8"/></svg>
<div class="t" style="letter-spacing:-0.752px;left:122.60px;top:446.84px;font-size:8.7px;color:#e4e4e4;word-spacing:0.9px;">Drop Area</div>
<svg class="a" style="left:38.75px;top:475.5px;" width="20" height="19.5" viewBox="0 0 20 19.5"><g fill="#b8b8b8"><rect x="0" y="0" width="7.700" height="19.500"/><rect x="12.200" y="0" width="7.800" height="19.500"/></g><g fill="#292929"><path d="M1.600 9.750l3.800-3v6z"/><path d="M18.400 9.750l-3.800-3v6z"/><rect x="5" y="9.150" width="2.700" height="1.200"/><rect x="12.200" y="9.150" width="2.700" height="1.200"/></g></svg>
<div class="t" style="letter-spacing:-0.726px;left:33.86px;top:494.84px;font-size:8.7px;color:#e4e4e4;">Flickable</div>
<svg class="a" style="left:130.75px;top:478.75px;" width="18.5" height="13.5" viewBox="0 0 18.5 13.5"><rect x="0.500" y="0.500" width="17.500" height="12.500" fill="none" stroke="#b8b8b8" stroke-width="1" stroke-dasharray="3 1.500"/></svg>
<div class="t" style="letter-spacing:-1.101px;left:119.45px;top:494.84px;font-size:8.7px;color:#e4e4e4;word-spacing:0.9px;">Focus Scope</div>
<svg class="a" style="left:38.75px;top:523.75px;" width="20.5" height="19.5" viewBox="0 0 20.5 19.5"><rect x="0.600" y="0.600" width="19.300" height="18.300" fill="none" stroke="#b8b8b8" stroke-width="1.200"/><g fill="#b8b8b8"><circle cx="5" cy="5.300" r="2"/><path d="M2.500 15.500l4.300-7.500 2.700 4.300 3-6.800 5.500 10z"/><rect x="2.500" y="16" width="15.500" height="1.400"/></g></svg>
<div class="t" style="letter-spacing:-0.681px;left:37.68px;top:543.09px;font-size:8.7px;color:#e4e4e4;">Image</div>
<svg class="a" style="left:130px;top:523.25px;" width="20.5" height="20" viewBox="0 0 20.5 20"><g fill="none" stroke="#b8b8b8" stroke-width="1.500"><path d="M0.750 5V0.750H5M15.500 0.750h4.250V5M19.750 15v4.250H15.500M5 19.250H0.750V15"/><rect x="5.800" y="5.800" width="9" height="8.500"/></g></svg>
<div class="t" style="letter-spacing:-0.414px;left:131.57px;top:543.09px;font-size:8.7px;color:#e4e4e4;">Item</div>
<svg class="a" style="left:42.5px;top:571.25px;" width="13.5" height="20" viewBox="0 0 13.5 20"><path d="M0.500 0.300V16l4.200-3.400 2.600 6.600 2.900-1.200-2.700-6.300 5.400-0.300z" fill="#b8b8b8"/></svg>
<div class="t" style="letter-spacing:-0.727px;left:27.89px;top:591.09px;font-size:8.7px;color:#e4e4e4;word-spacing:0.9px;">Mouse Area</div>
<div class="a" style="left:130px;top:574.25px;width:20.5px;height:14.5px;background:#b8b8b8;border-radius:4.500px"></div>
<div class="t" style="letter-spacing:-0.819px;left:123.32px;top:591.09px;font-size:8.7px;color:#e4e4e4;">Rectangle</div>
</body>
</html>
